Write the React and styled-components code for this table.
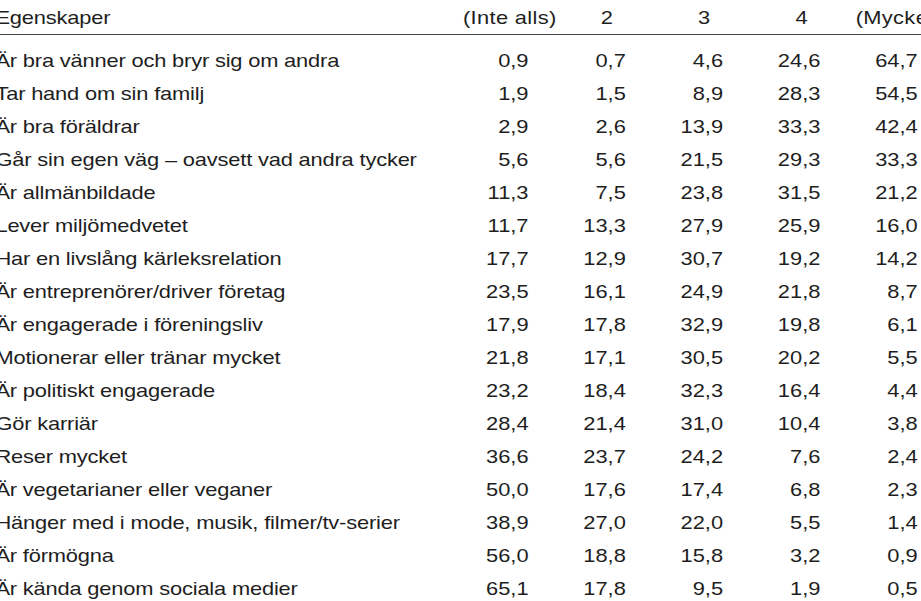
import React from 'react';
import styled, { createGlobalStyle } from 'styled-components';

const rows = [
	['Är bra vänner och bryr sig om andra', '0,9', '0,7', '4,6', '24,6', '64,7'],
	['Tar hand om sin familj', '1,9', '1,5', '8,9', '28,3', '54,5'],
	['Är bra föräldrar', '2,9', '2,6', '13,9', '33,3', '42,4'],
	['Går sin egen väg – oavsett vad andra tycker', '5,6', '5,6', '21,5', '29,3', '33,3'],
	['Är allmänbildade', '11,3', '7,5', '23,8', '31,5', '21,2'],
	['Lever miljömedvetet', '11,7', '13,3', '27,9', '25,9', '16,0'],
	['Har en livslång kärleksrelation', '17,7', '12,9', '30,7', '19,2', '14,2'],
	['Är entreprenörer/driver företag', '23,5', '16,1', '24,9', '21,8', '8,7'],
	['Är engagerade i föreningsliv', '17,9', '17,8', '32,9', '19,8', '6,1'],
	['Motionerar eller tränar mycket', '21,8', '17,1', '30,5', '20,2', '5,5'],
	['Är politiskt engagerade', '23,2', '18,4', '32,3', '16,4', '4,4'],
	['Gör karriär', '28,4', '21,4', '31,0', '10,4', '3,8'],
	['Reser mycket', '36,6', '23,7', '24,2', '7,6', '2,4'],
	['Är vegetarianer eller veganer', '50,0', '17,6', '17,4', '6,8', '2,3'],
	['Hänger med i mode, musik, filmer/tv-serier', '38,9', '27,0', '22,0', '5,5', '1,4'],
	['Är förmögna', '56,0', '18,8', '15,8', '3,2', '0,9'],
	['Är kända genom sociala medier', '65,1', '17,8', '9,5', '1,9', '0,5'],
];

const headers = ['(Inte alls)', '2', '3', '4', '(Mycket)'];

export default function App() {
	return (
		<>
			<GlobalStyle />
			<Table>
				<HeadRow>
					<Label>Egenskaper</Label>
					{headers.map((h) => (
						<HeadCell key={h}>{h}</HeadCell>
					))}
				</HeadRow>
				<Body>
					{rows.map(([label, ...values]) => (
						<Row key={label}>
							<Label>{label}</Label>
							{values.map((v, i) => (
								<Cell key={i}>{v}</Cell>
							))}
						</Row>
					))}
				</Body>
			</Table>
		</>
	);
}

const GlobalStyle = createGlobalStyle`
	html, body {
		margin: 0;
		background: #fff;
		overflow: hidden;
	}
	body {
		font-family: "Liberation Sans", Arial, sans-serif;
		color: #1e1e1e;
	}
`;

// the source type is wider than it is tall, so the whole table is stretched
const Table = styled.div`
	width: 828px;
	margin-left: -4px;
	transform: scaleX(1.15);
	transform-origin: 4px 0;
	font-size: 19px;
	line-height: 33px;
`;

const grid = `
	display: grid;
	grid-template-columns: 405px repeat(5, 84.6px);
	height: 33px;
	white-space: nowrap;
`;

const HeadRow = styled.div`
	${grid}
	padding-top: 1px;
	border-bottom: 1px solid #444;
`;

const Body = styled.div`
	padding-top: 9px;
`;

const Row = styled.div`
	${grid}
`;

const Label = styled.div`
	letter-spacing: -0.15px;
`;

const HeadCell = styled.div`
	text-align: center;
	letter-spacing: 0.3px;
`;

const Cell = styled.div`
	text-align: right;
	padding-right: 26px;
`;
